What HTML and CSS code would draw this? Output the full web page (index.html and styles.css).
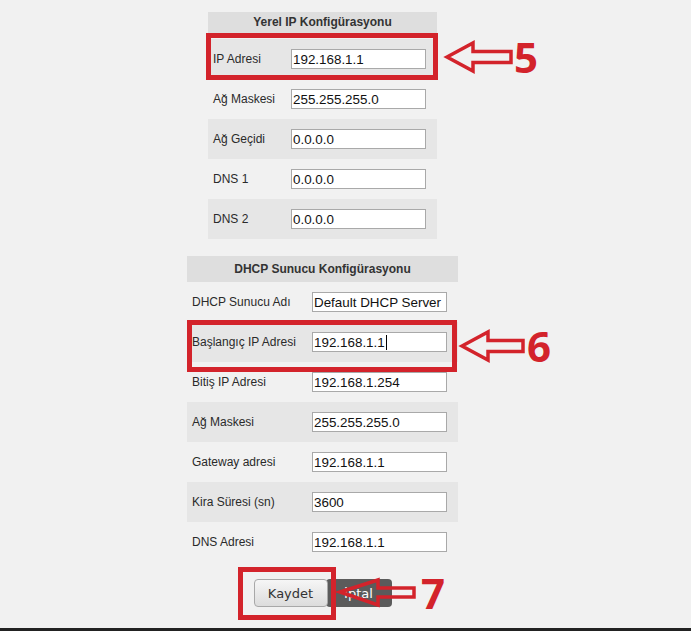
FILE: index.html
```html
<!DOCTYPE html>
<html lang="tr">
<head>
<meta charset="utf-8">
<title>Yerel IP Konfigürasyonu</title>
<link rel="stylesheet" href="styles.css">
</head>
<body>
<main class="page">
  <section class="cfg cfg-lan">
    <div class="cfg-head">Yerel IP Konfigürasyonu</div>
    <div class="row shade"><span class="lbl">IP Adresi</span><input class="fld" type="text" value="192.168.1.1"></div>
    <div class="row"><span class="lbl">Ağ Maskesi</span><input class="fld" type="text" value="255.255.255.0"></div>
    <div class="row shade"><span class="lbl">Ağ Geçidi</span><input class="fld" type="text" value="0.0.0.0"></div>
    <div class="row"><span class="lbl">DNS 1</span><input class="fld" type="text" value="0.0.0.0"></div>
    <div class="row shade"><span class="lbl">DNS 2</span><input class="fld" type="text" value="0.0.0.0"></div>
  </section>

  <section class="cfg cfg-dhcp">
    <div class="cfg-head">DHCP Sunucu Konfigürasyonu</div>
    <div class="row"><span class="lbl">DHCP Sunucu Adı</span><input class="fld" type="text" value="Default DHCP Server"></div>
    <div class="row shade"><span class="lbl">Başlangıç IP Adresi</span><span class="fld fld-active">192.168.1.1<span class="caret"></span></span></div>
    <div class="row"><span class="lbl">Bitiş IP Adresi</span><input class="fld" type="text" value="192.168.1.254"></div>
    <div class="row shade"><span class="lbl">Ağ Maskesi</span><input class="fld" type="text" value="255.255.255.0"></div>
    <div class="row"><span class="lbl">Gateway adresi</span><input class="fld" type="text" value="192.168.1.1"></div>
    <div class="row shade"><span class="lbl">Kira Süresi (sn)</span><input class="fld" type="text" value="3600"></div>
    <div class="row"><span class="lbl">DNS Adresi</span><input class="fld" type="text" value="192.168.1.1"></div>
  </section>

  <div class="actions">
    <button class="btn btn-save" type="button">Kaydet</button>
    <button class="btn btn-cancel" type="button">İptal</button>
  </div>
</main>
<footer class="bottom-bar"></footer>

<svg class="marks" width="691" height="631" viewBox="0 0 691 631" aria-hidden="true">
  <g fill="none" stroke="#d3232b" stroke-width="5">
    <rect x="208.5" y="35.5" width="227" height="42"/>
    <rect x="189.5" y="322.5" width="265" height="47"/>
    <rect x="240.5" y="569.5" width="93" height="48"/>
  </g>
  <g fill="none" stroke="#d3232b" stroke-width="3.5" stroke-linejoin="miter">
    <polygon points="447,57 473,43 473,51.5 511,51.5 511,62.5 473,62.5 473,71"/>
    <polygon points="462,346 488,332 488,340.5 523,340.5 523,351.5 488,351.5 488,360"/>
    <polygon points="340,592 378,580 378,588 414,588 414,597 378,597 378,605"/>
  </g>
</svg>
<span class="step step-5">5</span>
<span class="step step-6">6</span>
<span class="step step-7">7</span>
</body>
</html>
```

FILE: styles.css
```css
html, body {
  margin: 0;
  padding: 0;
}
body {
  background: #f1f1f1;
  height: 631px;
  display: flex;
  flex-direction: column;
  position: relative;
  overflow: hidden;
  font-family: "Liberation Sans", Arial, sans-serif;
  color: #222;
}
.page {
  width: 645px;
  display: flex;
  flex-direction: column;
  align-items: center;
  padding-top: 12px;
}
.cfg {
  display: flex;
  flex-direction: column;
}
.cfg-lan {
  width: 229px;
}
.cfg-dhcp {
  width: 271px;
  margin-top: 17px;
}
.cfg-head {
  background: #dedede;
  font-weight: bold;
  font-size: 12px;
  color: #333;
  text-align: center;
}
.cfg-lan .cfg-head {
  height: 21px;
  line-height: 21px;
  margin-bottom: 6px;
}
.cfg-dhcp .cfg-head {
  height: 26px;
  line-height: 26px;
}
.row {
  height: 40px;
  display: flex;
  align-items: center;
  padding-left: 5px;
  box-sizing: border-box;
}
.row.shade {
  background: #e6e6e6;
}
.lbl {
  font-size: 12px;
  color: #2a2a2a;
}
.cfg-lan .lbl {
  width: 78px;
}
.cfg-dhcp .lbl {
  width: 120px;
}
.fld {
  width: 135px;
  height: 20px;
  box-sizing: border-box;
  border: 1px solid #a9a9a9;
  background: #fff;
  padding: 0 1px;
  margin: 0;
  font-family: "Liberation Sans", Arial, sans-serif;
  font-size: 13.4px;
  color: #111;
  outline: none;
}
.fld-active {
  display: flex;
  align-items: center;
  white-space: nowrap;
}
.caret {
  display: inline-block;
  width: 1px;
  height: 15px;
  margin-left: 1px;
  background: #000;
}
.actions {
  margin-top: 17px;
  display: flex;
}
.btn {
  height: 28px;
  border-radius: 4px;
  font-family: "DejaVu Sans", Verdana, sans-serif;
  font-size: 13px;
  margin: 0;
  padding: 0;
}
.btn-save {
  width: 74px;
  border: 1px solid #a8a8a8;
  background: linear-gradient(#f6f6f6, #dcdcdc);
  color: #333;
  position: relative;
  z-index: 1;
}
.btn-cancel {
  width: 66px;
  margin-left: -2px;
  border: none;
  background: #5b5b5b;
  color: #fff;
}
.bottom-bar {
  margin-top: auto;
  height: 3px;
  background: #222;
}
.marks {
  position: absolute;
  left: 0;
  top: 0;
  pointer-events: none;
}
.step {
  position: absolute;
  font-family: "Open Sans", "Liberation Sans", sans-serif;
  font-weight: bold;
  font-size: 42px;
  line-height: 42px;
  color: #d3232b;
}
.step-5 { left: 514px; top: 36px; }
.step-6 { left: 527px; top: 325px; }
.step-7 { left: 421px; top: 572px; }
```
